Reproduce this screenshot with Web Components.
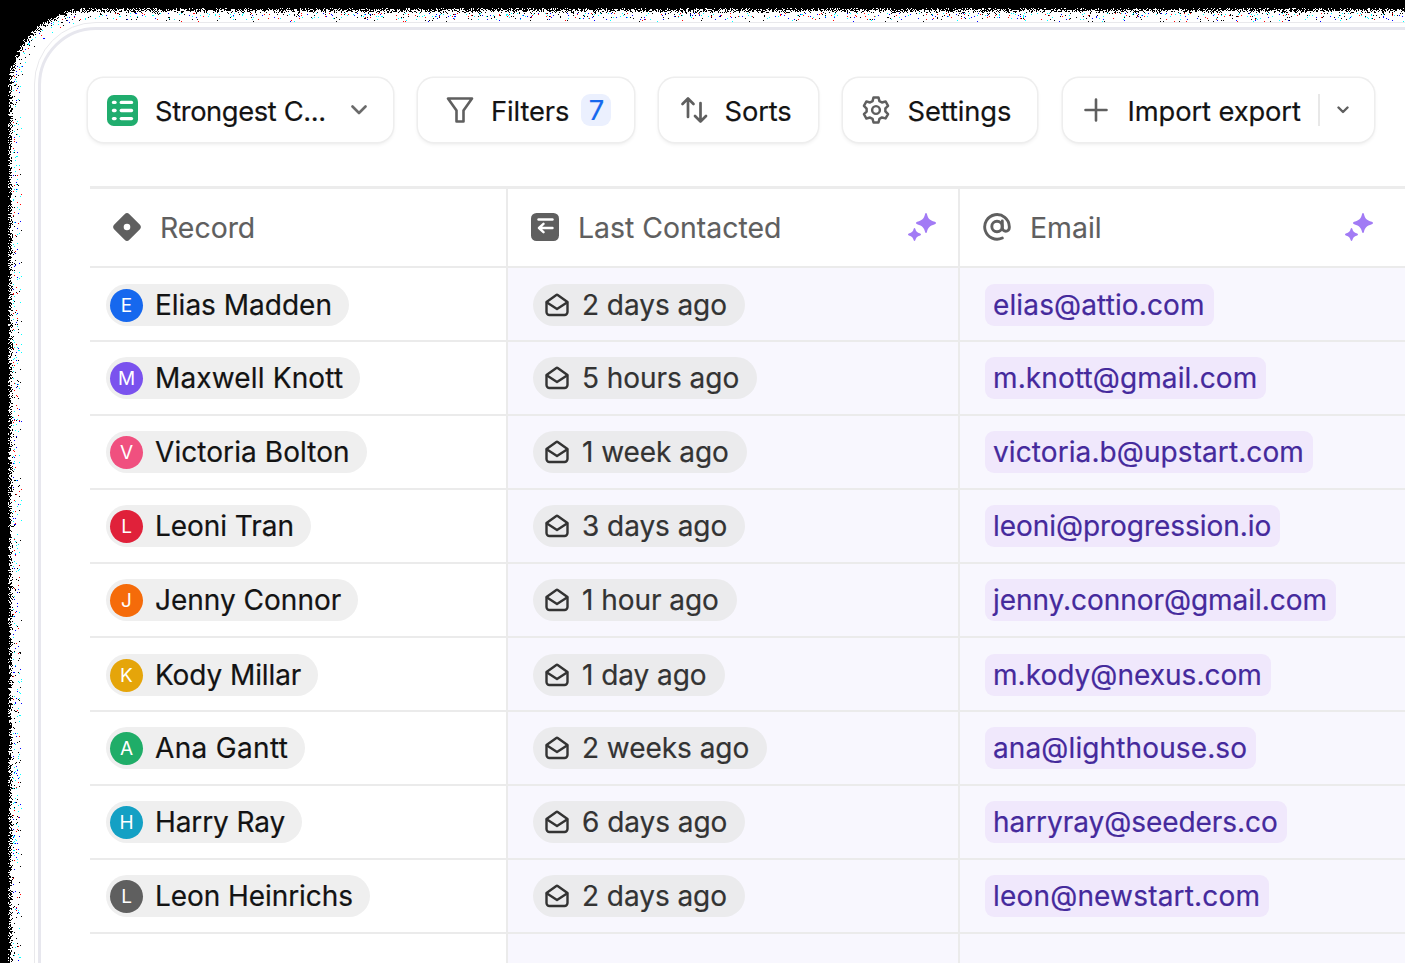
<!DOCTYPE html>
<html>
<head>
<meta charset="utf-8">
<title>Records</title>
<style>
  html, body { margin: 0; height: 100%; background: #000; overflow: hidden; }
  body { font-family: Inter, "Liberation Sans", sans-serif; }
</style>
</head>
<body>
<app-shell>
  <tool-bar>
    <tool-button kind="view">Strongest C...</tool-button>
    <tool-button kind="filter" count="7">Filters</tool-button>
    <tool-button kind="sort">Sorts</tool-button>
    <tool-button kind="settings">Settings</tool-button>
    <tool-button kind="plus">Import export</tool-button>
  </tool-bar>
  <record-table></record-table>
</app-shell>

<script>
const ICONS = {
  view: `<svg width="31" height="31" viewBox="0 0 32 32"><rect width="32" height="32" rx="7" fill="#20ad6e"/><g fill="#fff"><rect x="5" y="6" width="5" height="3.4" rx="1.7"/><rect x="13" y="6" width="14" height="3.4" rx="1.7"/><rect x="5" y="14.3" width="5" height="3.4" rx="1.7"/><rect x="13" y="14.3" width="14" height="3.4" rx="1.7"/><rect x="5" y="22.6" width="5" height="3.4" rx="1.7"/><rect x="13" y="22.6" width="14" height="3.4" rx="1.7"/></g></svg>`,
  filter: `<svg width="28" height="28" viewBox="0 0 28 28" fill="none" stroke="#5f5f5f" stroke-width="2.6" stroke-linejoin="round"><path d="M2 2.5h24L17.5 14.5V25.5h-7V14.5z"/></svg>`,
  sort: `<svg width="28" height="28" viewBox="0 0 28 28" fill="none" stroke="#5f5f5f" stroke-width="2.7" stroke-linecap="round" stroke-linejoin="round"><path d="M8 21V2.5M2.5 8 8 2.5 13.500 8"/><path d="M20.500 7v18.500M15 20l5.500 5.500L26 20"/></svg>`,
  settings: `<svg width="28" height="28" viewBox="1 1 26 26" fill="none" stroke="#5f5f5f" stroke-width="2.3" stroke-linejoin="round"><path d="M11.700 2.300h4.600l.9 3.400 2.300 1.300 3.400-.9 2.300 4-2.500 2.500v2.700l2.500 2.500-2.300 4-3.400-.9-2.300 1.300-.9 3.400h-4.600l-.9-3.400L8.500 21l-3.400.9-2.300-4 2.500-2.500v-2.700L2.800 10.100l2.300-4 3.400.9 2.300-1.300z"/><circle cx="14" cy="14" r="3.600"/></svg>`,
  plus: `<svg width="28" height="28" viewBox="0 0 28 28" fill="none" stroke="#5f5f5f" stroke-width="2.6" stroke-linecap="round"><path d="M14 3.500v21M3.500 14h21"/></svg>`,
  chevron: `<svg width="16" height="10" viewBox="0 0 16 10" fill="none" stroke="#6b6b6b" stroke-width="2.6" stroke-linecap="round" stroke-linejoin="round"><path d="M1.500 1.500 8 8l6.500-6.500"/></svg>`,
  chevronSmall: `<svg width="12" height="8" viewBox="0 0 12 8" fill="none" stroke="#5f5f5f" stroke-width="2.4" stroke-linecap="round" stroke-linejoin="round"><path d="M1.500 1.500 6 6l4.500-4.500"/></svg>`,
  record: `<svg width="28" height="28" viewBox="0 0 28 28"><path fill="#5f5f5f" fill-rule="evenodd" d="M11.600 1.300a3.400 3.400 0 0 1 4.800 0l10.300 10.300a3.400 3.400 0 0 1 0 4.800L16.400 26.700a3.400 3.400 0 0 1-4.800 0L1.300 16.400a3.400 3.400 0 0 1 0-4.800zM14 10.700a3.300 3.300 0 1 0 0 6.600 3.300 3.300 0 0 0 0-6.600z"/></svg>`,
  contacted: `<svg width="28" height="28" viewBox="0 0 28 28"><rect width="28" height="28" rx="5.500" fill="#5f5f5f"/><g fill="none" stroke="#fff" stroke-width="2.400" stroke-linecap="round" stroke-linejoin="round"><path d="M7.500 6.500h14"/><path d="M21.500 15H8M12.500 10.800 8 15l4.500 4.200"/></g></svg>`,
  at: `<svg width="28" height="28" viewBox="0 0 28 28" fill="none" stroke="#5f5f5f" stroke-width="2.900" stroke-linecap="round" stroke-linejoin="round"><path d="M19.300 25A12.300 12.300 0 1 1 26.300 13.500v1.200a3.500 3.500 0 0 1-7 0V8"/><circle cx="14" cy="13.500" r="5.200"/></svg>`,
  spark: `<svg width="28" height="28" viewBox="0 0 28 28" fill="#a27bf5"><path d="M18 0Q18.700 0 19 1.200C19.800 5 21.500 7.200 26.800 8.800Q28 9.300 28 10T26.800 11.200C21.500 12.800 19.800 15 19 18.800Q18.700 20 18 20T17 18.800C16.200 15 14.500 12.800 9.200 11.200Q8 10.700 8 10T9.200 8.800C14.500 7.200 16.200 5 17 1.200Q17.300 0 18 0Z"/><path d="M6.500 12.500Q7 12.500 7.300 13.300C7.900 15.800 9 17.100 12.200 18.100Q13 18.400 13 19T12.200 19.900C9 20.900 7.900 22.200 7.300 24.700Q7 25.500 6.500 25.500T5.700 24.700C5.100 22.200 4 20.900.8 19.900Q0 19.600 0 19T.8 18.100C4 17.100 5.100 15.800 5.700 13.300Q6 12.500 6.500 12.500Z" transform="translate(0 2.500)"/></svg>`,
  mail: `<svg width="26" height="26" viewBox="0 0 26 26" fill="none" stroke="#333" stroke-width="2.400" stroke-linejoin="round" stroke-linecap="round"><path d="M2.500 10 12 3.200a1.700 1.700 0 0 1 2 0l9.500 6.800v10a3 3 0 0 1-3 3h-15a3 3 0 0 1-3-3z"/><path d="m3 10.500 10 6.500 10-6.500"/></svg>`
};

// last two values: small tracking corrections for the name and the address
const RECORDS = [
  ['E', '#1668ee', 'Elias Madden', '2 days ago', 'elias@attio.com', 0, .13],
  ['M', '#7a52ee', 'Maxwell Knott', '5 hours ago', 'm.knott@gmail.com', .15, .12],
  ['V', '#f0507f', 'Victoria Bolton', '1 week ago', 'victoria.b@upstart.com', .07, .09],
  ['L', '#e0213a', 'Leoni Tran', '3 days ago', 'leoni@progression.io', -.05, -.05],
  ['J', '#f56b0a', 'Jenny Connor', '1 hour ago', 'jenny.connor@gmail.com', 0, -.05],
  ['K', '#e5a50a', 'Kody Millar', '1 day ago', 'm.kody@nexus.com', -.09, .03],
  ['A', '#1fad68', 'Ana Gantt', '2 weeks ago', 'ana@lighthouse.so', .33, .12],
  ['H', '#13a0c4', 'Harry Ray', '6 days ago', 'harryray@seeders.co', -.1, -.05],
  ['L', '#5f5f5f', 'Leon Heinrichs', '2 days ago', 'leon@newstart.com', -.07, .18]
];

class AppShell extends HTMLElement {
  constructor() {
    super();
    this.attachShadow({ mode: 'open' }).innerHTML = `
      <style>
        :host { display: block; position: relative; width: 1405px; height: 963px; overflow: hidden; background: #000; }
        canvas { position: absolute; left: 0; top: 0; }
        .ring { position: absolute; left: 34px; top: 22px; width: 1500px; height: 1100px; box-sizing: border-box; border: 1.500px solid #e9e9ec; border-radius: 62px; }
        .panel { position: absolute; left: 38px; top: 27px; width: 1500px; height: 1100px; box-sizing: border-box; background: #fff; border: 3px solid #e7e7ee; border-radius: 58px; padding: 48px 0 0 46px; }
      </style>
      <canvas width="1405" height="963"></canvas>
      <div class="ring"></div>
      <div class="panel"><slot></slot></div>`;
  }

  connectedCallback() {
    this.paintEdge(this.shadowRoot.querySelector('canvas').getContext('2d'));
  }

  // speckled edge of the white area over the black page
  paintEdge(ctx) {
    const img = ctx.createImageData(1405, 963);
    const d = img.data;
    const R = 78, x0 = 10, y0 = 10;
    let seed = 12345;
    const rnd = () => (seed = (seed * 1664525 + 1013904223) >>> 0) / 4294967296;
    const accents = [[0, 255, 255], [0, 255, 255], [0, 0, 255], [255, 0, 0], [0, 0, 0], [0, 0, 0]];
    for (let y = 0; y < 963; y++) {
      for (let x = 0; x < 1405; x++) {
        const cx = Math.max(x0 + R - x, 0), cy = Math.max(y0 + R - y, 0);
        const dist = cx > 0 && cy > 0 ? R - Math.hypot(cx, cy) : (cx > 0 ? x - x0 : y - y0);
        let c = [255, 255, 255];
        if (dist < -3) c = [0, 0, 0];
        else if (dist < 3) c = rnd() < (dist + 3) / 6 ? [255, 255, 255] : [0, 0, 0];
        else if (dist < 12 && rnd() < 0.1 * (1 - (dist - 3) / 9) + 0.012) c = accents[Math.floor(rnd() * accents.length)];
        const i = (y * 1405 + x) * 4;
        d[i] = c[0]; d[i + 1] = c[1]; d[i + 2] = c[2]; d[i + 3] = 255;
      }
    }
    ctx.putImageData(img, 0, 0);
  }
}

class ToolBar extends HTMLElement {
  constructor() {
    super();
    this.attachShadow({ mode: 'open' }).innerHTML = `
      <style>:host { display: flex; gap: 25.500px; align-items: stretch; height: 64px; margin-left: 1px; }</style>
      <slot></slot>`;
  }
}

class ToolButton extends HTMLElement {
  constructor() {
    super();
    this.attachShadow({ mode: 'open' });
  }

  connectedCallback() {
    const kind = this.getAttribute('kind');
    const count = this.getAttribute('count');
    let tail = '';
    if (kind === 'view') tail = `<span class="chev">${ICONS.chevron}</span>`;
    if (count) tail = `<span class="count">${count}</span>`;
    if (kind === 'plus') tail = `<span class="split"></span><span class="small">${ICONS.chevronSmall}</span>`;
    this.shadowRoot.innerHTML = `
      <style>
        :host { display: flex; align-items: center; box-sizing: border-box; height: 64px; background: #fff; border-radius: 16px; box-shadow: 0 0 0 1.500px #eeeeee, 0 2px 4px rgba(0,0,0,.09); font-size: 27.300px; color: #131313; white-space: nowrap; letter-spacing: -0.1px; -webkit-text-stroke: 0.2px; }
        .icon { display: flex; flex: none; }
        .label { padding-top: 2px; }
        .count { display: flex; align-items: center; justify-content: center; width: 30px; height: 32px; margin-left: 12px; border-radius: 9px; background: #ebf0fe; color: #1668ee; }
        .chev { display: flex; margin-left: auto; margin-right: 26px; }
        .split { width: 2px; height: 32px; margin-left: 17px; background: #e8e8e8; }
        .small { display: flex; margin-left: 17px; }
        :host([kind=view]) { width: 304.500px; padding-left: 19px; letter-spacing: -0.38px; }
        :host([kind=view]) .icon { margin-right: 17px; }
        :host([kind=filter]) { width: 215.500px; padding-left: 28px; }
        :host([kind=filter]) .icon { margin-right: 17px; }
        :host([kind=sort]) { width: 158.500px; padding-left: 20.500px; }
        :host([kind=sort]) .icon { margin-right: 17px; }
        :host([kind=settings]) { width: 194px; padding-left: 18.500px; }
        :host([kind=settings]) .icon { margin-right: 18px; }
        :host([kind=plus]) { width: 311px; padding-left: 19px; }
        :host([kind=plus]) .icon { margin-right: 18px; }
      </style>
      <span class="icon">${ICONS[kind]}</span><span class="label"><slot></slot></span>${tail}`;
  }
}

class RecordChip extends HTMLElement {
  constructor() {
    super();
    this.attachShadow({ mode: 'open' }).innerHTML = `
      <style>
        :host { display: inline-flex; align-items: center; height: 42px; padding: 0 17px 0 4px; border-radius: 21px; background: #efefef; font-size: 28px; color: #131313; -webkit-text-stroke: 0.2px; }
        .avatar { display: flex; align-items: center; justify-content: center; width: 33px; height: 33px; margin-right: 12px; border-radius: 50%; font-size: 19px; color: #fff; letter-spacing: 0; -webkit-text-stroke: 0; }
      </style>
      <span class="avatar"></span><slot></slot>`;
  }

  connectedCallback() {
    const avatar = this.shadowRoot.querySelector('.avatar');
    avatar.textContent = this.getAttribute('initial');
    avatar.style.background = this.getAttribute('color');
  }
}

class TimeChip extends HTMLElement {
  constructor() {
    super();
    this.attachShadow({ mode: 'open' }).innerHTML = `
      <style>
        :host { display: inline-flex; align-items: center; height: 42px; padding: 0 18px 0 11px; border-radius: 21px; background: #ebebed; font-size: 28px; color: #333; letter-spacing: -0.05px; -webkit-text-stroke: 0.2px; }
        .icon { display: flex; margin-right: 12px; }
      </style>
      <span class="icon">${ICONS.mail}</span><slot></slot>`;
  }
}

class EmailChip extends HTMLElement {
  constructor() {
    super();
    this.attachShadow({ mode: 'open' }).innerHTML = `
      <style>
        :host { display: inline-flex; align-items: center; height: 42px; padding: 0 9px 0 8px; border-radius: 9px; background: #f0e8fc; font-size: 28px; color: #452a9c; -webkit-text-stroke: 0.2px; }
      </style>
      <slot></slot>`;
  }
}

class RecordTable extends HTMLElement {
  constructor() {
    super();
    this.attachShadow({ mode: 'open' });
  }

  connectedCallback() {
    const rows = RECORDS.map(([initial, color, name, time, email, nameTrack, mailTrack], i) => {
      const row = i === 0 || i === 5 ? ' low' : '';
      return `
      <div class="cell first${row}"><record-chip initial="${initial}" color="${color}" style="letter-spacing:${nameTrack}px">${name}</record-chip></div>
      <div class="cell tint${row}"><time-chip>${time}</time-chip></div>
      <div class="cell tint mail${row}"><email-chip style="letter-spacing:${mailTrack}px">${email}</email-chip></div>`;
    }).join('');
    this.shadowRoot.innerHTML = `
      <style>
        :host { display: grid; grid-template-columns: 418px 452px 445px; grid-template-rows: 79px repeat(9, 74px) 40px; width: 1315px; margin: 44px 0 0 3px; border-top: 3px solid #ececec; font-size: 28.400px; }
        .cell { display: flex; align-items: center; box-sizing: border-box; border-bottom: 2px solid #ebebeb; border-right: 2px solid #ebebeb; }
        .low { padding-top: 2px; }
        .first { padding-left: 16px; }
        .tint { background: #f8f7fe; padding-left: 25px; }
        .mail { border-right: 0; }
        .head { background: #fff; padding-left: 23px; padding-right: 22px; color: #5f5f5f; -webkit-text-stroke: 0.15px; }
        .head span { flex: none; display: flex; margin-right: 19px; margin-bottom: 2px; }
        .head b { font-weight: 400; flex: 1; }
        .head .spark { margin-right: 0; }
        .head.mail { padding-right: 32px; }
        .head.mail span { margin-right: 19px; }
        .head.mail .spark { margin-right: 0; }
        .tail { border-bottom: 0; }
      </style>
      <div class="cell head first"><span>${ICONS.record}</span><b>Record</b></div>
      <div class="cell head"><span>${ICONS.contacted}</span><b>Last Contacted</b><span class="spark">${ICONS.spark}</span></div>
      <div class="cell head mail"><span>${ICONS.at}</span><b>Email</b><span class="spark">${ICONS.spark}</span></div>
      ${rows}
      <div class="cell first tail"></div>
      <div class="cell tint tail"></div>
      <div class="cell tint mail tail"></div>`;
  }
}

customElements.define('app-shell', AppShell);
customElements.define('tool-bar', ToolBar);
customElements.define('tool-button', ToolButton);
customElements.define('record-chip', RecordChip);
customElements.define('time-chip', TimeChip);
customElements.define('email-chip', EmailChip);
customElements.define('record-table', RecordTable);
</script>
</body>
</html>
